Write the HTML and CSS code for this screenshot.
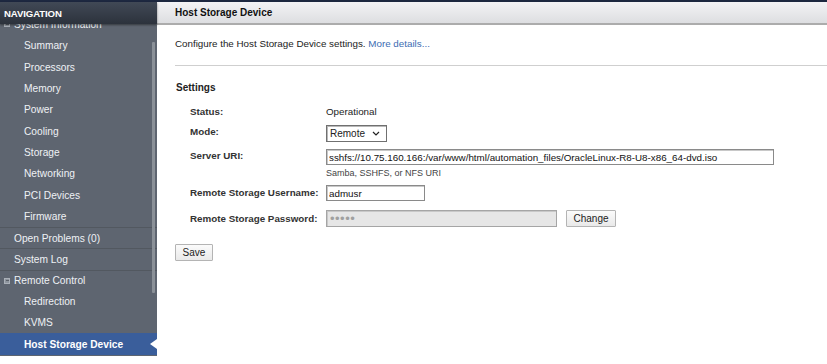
FILE: index.html
```html
<!DOCTYPE html>
<html>
<head>
<meta charset="utf-8">
<link rel="stylesheet" href="styles.css">
</head>
<body>
<div class="topstrip"></div>
<div class="app">
  <aside class="sidebar">
    <div class="nav-head">NAVIGATION</div>
    <div class="nav-scroll">
      <ul class="nav-list">
        <li class="nav-item top first"><span class="tog"></span>System Information</li>
        <li class="nav-item sub">Summary</li>
        <li class="nav-item sub">Processors</li>
        <li class="nav-item sub">Memory</li>
        <li class="nav-item sub">Power</li>
        <li class="nav-item sub">Cooling</li>
        <li class="nav-item sub">Storage</li>
        <li class="nav-item sub">Networking</li>
        <li class="nav-item sub">PCI Devices</li>
        <li class="nav-item sub">Firmware</li>
        <li class="nav-item top">Open Problems (0)</li>
        <li class="nav-item top">System Log</li>
        <li class="nav-item top"><span class="tog"></span>Remote Control</li>
        <li class="nav-item sub">Redirection</li>
        <li class="nav-item sub">KVMS</li>
        <li class="nav-item sub active">Host Storage Device<span class="arrow"></span></li>
      </ul>
      <div class="thumb"></div>
    </div>
  </aside>
  <main class="content">
    <div class="page-head">Host Storage Device</div>
    <div class="body">
      <p class="intro">Configure the Host Storage Device settings. <a href="#" class="link">More details...</a></p>
      <div class="rule"></div>
      <h2 class="section">Settings</h2>
      <div class="form">
        <div class="row r-status">
          <div class="lbl">Status:</div>
          <div class="val">Operational</div>
        </div>
        <div class="row r-mode">
          <div class="lbl">Mode:</div>
          <div class="selwrap">
            <select class="sel"><option>Remote</option></select>
            <svg class="chev" width="8" height="5" viewBox="0 0 8 5"><path d="M1 1 L4 4 L7 1" fill="none" stroke="#222" stroke-width="1.2"/></svg>
          </div>
        </div>
        <div class="row r-uri">
          <div class="lbl">Server URI:</div>
          <div class="col">
            <input class="inp uri" type="text" value="sshfs://10.75.160.166:/var/www/html/automation_files/OracleLinux-R8-U8-x86_64-dvd.iso">
            <div class="hint">Samba, SSHFS, or NFS URI</div>
          </div>
        </div>
        <div class="row r-user">
          <div class="lbl">Remote Storage Username:</div>
          <input class="inp user" type="text" value="admusr">
        </div>
        <div class="row r-pass">
          <div class="lbl">Remote Storage Password:</div>
          <input class="inp pass" type="password" value="abcde" disabled>
          <button class="btn change">Change</button>
        </div>
      </div>
      <button class="btn save">Save</button>
    </div>
  </main>
</div>
</body>
</html>
```

FILE: styles.css
```css
* { box-sizing: border-box; }
html, body { margin: 0; padding: 0; background: #fff; }
body {
  font-family: "Liberation Sans", Arial, sans-serif;
  font-size: 10px;
  color: #222;
  width: 827px;
  height: 364px;
  overflow: hidden;
}
.topstrip { height: 2px; background: #1d2840; }
.app { display: flex; align-items: flex-start; }

.sidebar {
  width: 157px;
  flex: 0 0 157px;
  height: 354px;
  background: #5e6570;
  display: flex;
  flex-direction: column;
  position: relative;
}
.nav-head {
  height: 22px;
  line-height: 23px;
  padding-left: 4px;
  color: #fff;
  font-weight: bold;
  font-size: 9.6px;
  letter-spacing: -0.1px;
  background: linear-gradient(#414956, #2c323c);
  box-shadow: 0 1px 2px rgba(0,0,0,0.45);
  position: relative;
  z-index: 2;
}
.nav-scroll {
  flex: 1;
  overflow: hidden;
  position: relative;
}
.nav-list {
  list-style: none;
  margin: -10px 0 0 0;
  padding: 0;
}
.nav-item {
  height: 21.3px;
  line-height: 21px;
  color: #eef1f5;
  font-size: 10.2px;
  white-space: nowrap;
  position: relative;
  display: flex;
  align-items: center;
}
.nav-item.sub { padding-left: 24px; }
.nav-item.top { padding-left: 14px; border-top: 1px solid #525860; }
.nav-item.top.first { border-top: none; }
.tog {
  position: absolute;
  left: 4px;
  top: 7px;
  width: 6px;
  height: 6px;
  border: 1px solid #aab0b8;
  background: #8e959e;
}
.tog::after {
  content: "";
  position: absolute;
  left: 0.5px;
  top: 1.5px;
  width: 3px;
  height: 1px;
  background: #5a6069;
}
.nav-item.active {
  background: #3a5e9b;
  font-weight: bold;
  color: #fff;
  height: 22px;
}
.arrow {
  position: absolute;
  right: 0;
  top: 6px;
  width: 0;
  height: 0;
  border-top: 5px solid transparent;
  border-bottom: 5px solid transparent;
  border-right: 7px solid #fff;
}
.thumb {
  position: absolute;
  left: 152px;
  top: 18px;
  width: 3px;
  height: 251px;
  background: #8b9198;
  border-radius: 1px;
}

.content { flex: 1; min-width: 0; }
.page-head {
  height: 23px;
  line-height: 21px;
  padding-left: 18px;
  font-weight: bold;
  font-size: 10px;
  color: #111;
  background: linear-gradient(#f3f3f5, #dddee1);
  border-bottom: 2px solid #acacac;
}
.body { padding: 0 0 0 18px; }
.intro { margin: 13px 0 0 0; line-height: 12px; font-size: 9.8px; color: #222; }
.link { color: #3d6db3; text-decoration: none; }
.rule { height: 1px; background: #cfcfcf; margin-top: 15px; }
.section {
  margin: 16px 0 0 1px;
  font-size: 10px;
  font-weight: bold;
  line-height: 12px;
  color: #222;
}
.form {
  margin: 12px 0 0 15px;
  display: flex;
  flex-direction: column;
}
.row { display: flex; align-items: flex-start; }
.lbl {
  width: 136px;
  flex: 0 0 136px;
  font-weight: bold;
  color: #333;
  font-size: 9.8px;
}
.r-status { height: 12px; line-height: 12px; }
.r-status .val { color: #222; font-size: 9.8px; }
.r-mode { margin-top: 7px; }
.r-mode .lbl { line-height: 14px; }
.selwrap { position: relative; width: 61px; height: 17px; }
.sel {
  appearance: none;
  -webkit-appearance: none;
  width: 61px;
  height: 17px;
  border: 1px solid #707070;
  box-shadow: inset 1px 1px 0 #b8b8b8;
  background: #fff;
  font-family: "Liberation Sans", Arial, sans-serif;
  font-size: 10px;
  color: #222;
  padding: 0 0 0 3px;
  border-radius: 0;
  outline: none;
}
.chev { position: absolute; right: 7px; top: 6px; pointer-events: none; }
.r-uri { margin-top: 7px; }
.r-uri .lbl { line-height: 13px; }
.col { display: flex; flex-direction: column; }
.inp {
  height: 16px;
  border: 1px solid #8a8a8a;
  box-shadow: inset 1px 1px 0 #c8c8c8;
  font-family: "Liberation Sans", Arial, sans-serif;
  font-size: 9.8px;
  color: #111;
  padding: 0 0 0 2px;
  border-radius: 0;
  outline: none;
  background: #fff;
}
.uri { width: 448px; }
.hint { margin-top: 2px; font-size: 9px; color: #444; line-height: 12px; }
.r-user { margin-top: 6px; }
.r-user .lbl { line-height: 15px; }
.user { width: 99px; }
.r-pass { margin-top: 9px; align-items: center; }
.r-pass .lbl { line-height: 15px; }
.pass {
  width: 231px;
  height: 17px;
  background: #e6e6e6;
  color: #a0a0a0;
  border-color: #a5a5a5;
  letter-spacing: 0.5px;
  font-size: 13px;
  padding-left: 3px;
}
.btn {
  font-family: "Liberation Sans", Arial, sans-serif;
  font-size: 10px;
  color: #222;
  background: linear-gradient(#fbfbfb, #e9e9e9);
  border: 1px solid #b4b4b4;
  border-radius: 1px;
  height: 17px;
  padding: 0 6px;
  line-height: 14px;
}
.change { margin-left: 9px; width: 50px; }
.save { margin-top: 17px; width: 38px; display: block; padding: 0; }
```
